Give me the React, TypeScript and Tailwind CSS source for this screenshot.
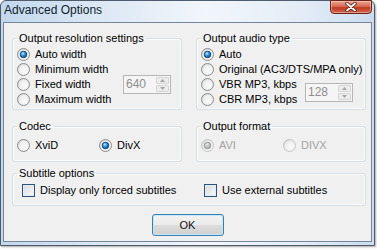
import React from "react";

function Radio({ checked = false, disabled = false }: { checked?: boolean; disabled?: boolean }) {
  return (
    <svg width="13" height="13" viewBox="0 0 13 13" className="shrink-0">
      <defs>
        <radialGradient id="rbg" cx="0.6" cy="0.6" r="0.7">
          <stop offset="0" stopColor="#fbfbfb" />
          <stop offset="0.6" stopColor="#eeeeee" />
          <stop offset="1" stopColor="#cfcfcf" />
        </radialGradient>
        <radialGradient id="rdot" cx="0.4" cy="0.35" r="0.7">
          <stop offset="0" stopColor="#bfeaff" />
          <stop offset="0.45" stopColor="#2f93dc" />
          <stop offset="1" stopColor="#0b4a88" />
        </radialGradient>
        <radialGradient id="rdotd" cx="0.4" cy="0.35" r="0.7">
          <stop offset="0" stopColor="#e6e6e6" />
          <stop offset="1" stopColor="#a2a2a2" />
        </radialGradient>
      </defs>
      <circle cx="6.5" cy="6.5" r="6" fill="url(#rbg)" stroke={disabled ? "#c4c4c4" : "#8c8c8c"} strokeWidth="1" />
      {checked && (
        <circle
          cx="6.5"
          cy="6.5"
          r="3.3"
          fill={disabled ? "url(#rdotd)" : "url(#rdot)"}
          stroke={disabled ? "#8e8e8e" : "#0c3867"}
          strokeWidth="0.8"
        />
      )}
    </svg>
  );
}

function RadioItem({
  label,
  checked,
  disabled,
  className = "",
}: {
  label: string;
  checked?: boolean;
  disabled?: boolean;
  className?: string;
}) {
  return (
    <div className={`flex items-center h-[15px] gap-[5px] whitespace-nowrap ${className}`}>
      <Radio checked={checked} disabled={disabled} />
      <span className={disabled ? "text-[#a3a3a3]" : "text-black"}>{label}</span>
    </div>
  );
}

function Checkbox({ label, className = "" }: { label: string; className?: string }) {
  return (
    <div className={`flex items-center h-[15px] gap-[5px] whitespace-nowrap ${className}`}>
      <div className="w-[13px] h-[13px] border border-[#2c5379] bg-[linear-gradient(135deg,#d9dde1,#f7f8f9)] shadow-[inset_0_0_0_1px_#e9ecee]" />
      <span>{label}</span>
    </div>
  );
}

function Spin({ value, className = "" }: { value: string; className?: string }) {
  return (
    <div className={`w-[48px] h-[19px] border border-[#b7b7b7] bg-[#f5f5f5] flex items-stretch ${className}`}>
      <span className="flex-1 pl-[2px] text-[12px] leading-[17px] text-[#8e8e8e]">{value}</span>
      <div className="w-[13px] my-[1px] mr-[1px] flex flex-col gap-[1px]">
        <div className="flex-1 flex items-center justify-center border border-[#d6d6d6] bg-[#ececec] rounded-[1px]">
          <svg width="5" height="3" viewBox="0 0 5 3">
            <path d="M0 3 L2.5 0 L5 3 Z" fill="#a6a6a6" />
          </svg>
        </div>
        <div className="flex-1 flex items-center justify-center border border-[#d6d6d6] bg-[#ececec] rounded-[1px]">
          <svg width="5" height="3" viewBox="0 0 5 3">
            <path d="M0 0 L2.5 3 L5 0 Z" fill="#a6a6a6" />
          </svg>
        </div>
      </div>
    </div>
  );
}

function Group({
  title,
  className = "",
  children,
}: {
  title: string;
  className?: string;
  children: React.ReactNode;
}) {
  return (
    <fieldset className={`border border-[#d5dfe5] rounded-[3px] shadow-[inset_0_0_0_1px_#fbfbfb] ${className}`}>
      <legend className="ml-[4px] px-[2px] leading-[13px] text-black">{title}</legend>
      {children}
    </fieldset>
  );
}

export default function App() {
  return (
    <div className="w-[377px] h-[249px] bg-white font-['Liberation_Sans',Arial,sans-serif] text-[11px] text-black">
      <div className="w-[375px] h-[246px] flex flex-col border border-[#4f5c6b] rounded-t-[6px] px-[2px] pb-[3px] bg-[linear-gradient(90deg,#c3d7ed_0%,#dbe7f4_25%,#f1f6fb_55%,#e4edf7_80%,#cbdcef_100%)] shadow-[1px_1px_2px_rgba(0,0,0,0.35)]">
        {/* Title bar */}
        <div className="h-[21px] flex items-start justify-between">
          <span className="pt-[2px] pl-[1px] text-[12px] leading-[14px] text-[#0f1e2e]">Advanced Options</span>
          <div className="w-[42px] h-[14px] -mt-[1px] rounded-b-[4px] border border-[#6a2418] bg-[linear-gradient(#eba695_0%,#d86a52_45%,#c03a20_55%,#d4654c_100%)] shadow-[inset_0_0_0_1px_rgba(255,220,210,0.45)] flex items-center justify-center">
            <svg width="12" height="10" viewBox="0 0 12 10">
              <path d="M2 1.5 L10 8.5 M10 1.5 L2 8.5" stroke="#4a1a12" strokeWidth="3.4" strokeLinecap="round" />
              <path d="M2 1.5 L10 8.5 M10 1.5 L2 8.5" stroke="#ffffff" strokeWidth="1.8" strokeLinecap="round" />
            </svg>
          </div>
        </div>

        {/* Client area */}
        <div className="flex-1 border border-[#73869b] bg-[#f0f0f0] pt-[9px] pl-[8px] pr-[4px] flex flex-col">
          <div className="flex gap-[14px]">
            <Group title="Output resolution settings" className="w-[170px]">
              <div className="grid grid-cols-[106px_auto] pl-[4px] pt-[2px] pb-[2px]">
                <RadioItem label="Auto width" checked className="col-span-2" />
                <RadioItem label="Minimum width" className="col-span-2" />
                <RadioItem label="Fixed width" />
                <div className="flex items-center h-[15px]">
                  <Spin value="640" className="-my-[2px]" />
                </div>
                <RadioItem label="Maximum width" className="col-span-2" />
              </div>
            </Group>
            <Group title="Output audio type" className="w-[170px]">
              <div className="grid grid-cols-[104px_auto] pl-[4px] pt-[2px] pb-[2px]">
                <RadioItem label="Auto" checked className="col-span-2" />
                <RadioItem label="Original (AC3/DTS/MPA only)" className="col-span-2" />
                <RadioItem label="VBR MP3, kbps" className="col-start-1 row-start-3" />
                <RadioItem label="CBR MP3, kbps" className="col-start-1 row-start-4" />
                <div className="col-start-2 row-start-3 row-span-2 flex items-center">
                  <Spin value="128" />
                </div>
              </div>
            </Group>
          </div>

          <div className="flex gap-[14px] mt-[10px]">
            <Group title="Codec" className="w-[170px]">
              <div className="flex pl-[4px] pt-[5px] pb-[8px]">
                <RadioItem label="XviD" className="w-[82px]" />
                <RadioItem label="DivX" checked />
              </div>
            </Group>
            <Group title="Output format" className="w-[170px]">
              <div className="flex pl-[4px] pt-[5px] pb-[8px]">
                <RadioItem label="AVI" checked disabled className="w-[82px]" />
                <RadioItem label="DIVX" disabled />
              </div>
            </Group>
          </div>

          <Group title="Subtitle options" className="mt-[5px] w-[354px]">
            <div className="flex pl-[9px] pt-[3px] pb-[7px]">
              <Checkbox label="Display only forced subtitles" className="w-[182px]" />
              <Checkbox label="Use external subtitles" />
            </div>
          </Group>

          <div className="flex justify-center mt-[8px] pr-[4px]">
            <button className="w-[72px] h-[22px] rounded-[3px] border border-[#3c7fb1] bg-[linear-gradient(#f3f3f3_0%,#ebebeb_48%,#dddddd_52%,#d0d0d0_100%)] shadow-[inset_0_0_0_1px_#c4e8fa] text-[11px] leading-[20px] text-[#111]">
              OK
            </button>
          </div>
        </div>
      </div>
    </div>
  );
}
